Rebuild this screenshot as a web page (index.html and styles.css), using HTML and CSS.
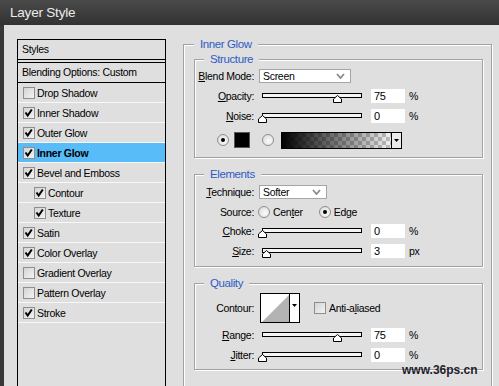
FILE: index.html
```html
<!DOCTYPE html>
<html>
<head>
<meta charset="utf-8">
<title>Layer Style</title>
<link rel="stylesheet" href="styles.css">
</head>
<body>
<div class="window">
  <div class="titlebar">Layer Style</div>
  <div class="main">
    <div class="styles-list">
      <div class="list-head">Styles</div>
      <div class="list-blend">Blending Options: Custom</div>
      <div class="item"><span class="cb"></span>Drop Shadow</div>
      <div class="item"><span class="cb"><svg viewBox="0 0 10 10"><path d="M1.5 4.5L3.7 7.6L7.8 1.5"/></svg></span>Inner Shadow</div>
      <div class="item"><span class="cb"><svg viewBox="0 0 10 10"><path d="M1.5 4.5L3.7 7.6L7.8 1.5"/></svg></span>Outer Glow</div>
      <div class="item sel"><span class="cb"><svg viewBox="0 0 10 10"><path d="M1.5 4.5L3.7 7.6L7.8 1.5"/></svg></span>Inner Glow</div>
      <div class="item"><span class="cb"><svg viewBox="0 0 10 10"><path d="M1.5 4.5L3.7 7.6L7.8 1.5"/></svg></span>Bevel and Emboss</div>
      <div class="item sub"><span class="cb"><svg viewBox="0 0 10 10"><path d="M1.5 4.5L3.7 7.6L7.8 1.5"/></svg></span>Contour</div>
      <div class="item sub"><span class="cb"><svg viewBox="0 0 10 10"><path d="M1.5 4.5L3.7 7.6L7.8 1.5"/></svg></span>Texture</div>
      <div class="item"><span class="cb"><svg viewBox="0 0 10 10"><path d="M1.5 4.5L3.7 7.6L7.8 1.5"/></svg></span>Satin</div>
      <div class="item"><span class="cb"><svg viewBox="0 0 10 10"><path d="M1.5 4.5L3.7 7.6L7.8 1.5"/></svg></span>Color Overlay</div>
      <div class="item"><span class="cb"></span>Gradient Overlay</div>
      <div class="item"><span class="cb"></span>Pattern Overlay</div>
      <div class="item"><span class="cb"><svg viewBox="0 0 10 10"><path d="M1.5 4.5L3.7 7.6L7.8 1.5"/></svg></span>Stroke</div>
    </div>

    <section class="group outer">
      <div class="legend outer-legend">Inner Glow</div>

      <section class="group inner structure">
        <div class="legend">Structure</div>
        <div class="row h20">
          <span class="lbl"><u>B</u>lend Mode:</span>
          <div class="ctl"><div class="select w-blend"><span>Screen</span><svg class="chev" viewBox="0 0 9 6"><polyline points="1,1 4.5,5 8,1"/></svg></div></div>
        </div>
        <div class="row h20">
          <span class="lbl"><u>O</u>pacity:</span>
          <div class="ctl"><div class="slider"><div class="track"></div><svg class="thumb" style="left:71px" viewBox="0 0 9 8"><polygon points="0.5,7.5 0.5,4 4.5,0.5 8.5,4 8.5,7.5"/></svg></div><span class="num">75</span><span class="unit">%</span></div>
        </div>
        <div class="row h20">
          <span class="lbl"><u>N</u>oise:</span>
          <div class="ctl"><div class="slider"><div class="track"></div><svg class="thumb" style="left:-4px" viewBox="0 0 9 8"><polygon points="0.5,7.5 0.5,4 4.5,0.5 8.5,4 8.5,7.5"/></svg></div><span class="num">0</span><span class="unit">%</span></div>
        </div>
        <div class="color-row">
          <span class="radio on"></span>
          <span class="swatch"></span>
          <span class="radio r2"></span>
          <div class="gradbox"><span class="grad"></span><span class="gbtn"><svg viewBox="0 0 5 3"><polygon points="0,0 5,0 2.5,3"/></svg></span></div>
        </div>
      </section>

      <section class="group inner elements">
        <div class="legend">Elements</div>
        <div class="row h21">
          <span class="lbl"><u>T</u>echnique:</span>
          <div class="ctl"><div class="select w-tech"><span>Softer</span><svg class="chev" viewBox="0 0 9 6"><polyline points="1,1 4.5,5 8,1"/></svg></div></div>
        </div>
        <div class="row h20">
          <span class="lbl">Source:</span>
          <div class="ctl src"><span class="radio"></span><span class="rtext">Cen<u>t</u>er</span><span class="radio on r-edge"></span><span class="rtext">Ed<u>g</u>e</span></div>
        </div>
        <div class="row h18">
          <span class="lbl"><u>C</u>hoke:</span>
          <div class="ctl"><div class="slider"><div class="track"></div><svg class="thumb" style="left:-4px" viewBox="0 0 9 8"><polygon points="0.5,7.5 0.5,4 4.5,0.5 8.5,4 8.5,7.5"/></svg></div><span class="num">0</span><span class="unit">%</span></div>
        </div>
        <div class="row h21">
          <span class="lbl"><u>S</u>ize:</span>
          <div class="ctl"><div class="slider"><div class="track"></div><svg class="thumb" style="left:0px" viewBox="0 0 9 8"><polygon points="0.5,7.5 0.5,4 4.5,0.5 8.5,4 8.5,7.5"/></svg></div><span class="num">3</span><span class="unit">px</span></div>
        </div>
      </section>

      <section class="group inner quality">
        <div class="legend">Quality</div>
        <div class="row h35">
          <span class="lbl">Contour:</span>
          <div class="ctl">
            <div class="contour"><span class="cprev"><svg viewBox="0 0 28 28"><polygon points="1,28 28,1 28,28"/></svg></span><span class="cbtn"><svg viewBox="0 0 5 3"><polygon points="0,0 5,0 2.5,3"/></svg></span></div>
            <span class="cb aa"></span><span class="aa-text">Anti-a<u>l</u>iased</span>
          </div>
        </div>
        <div class="row h20">
          <span class="lbl"><u>R</u>ange:</span>
          <div class="ctl"><div class="slider"><div class="track"></div><svg class="thumb" style="left:71px" viewBox="0 0 9 8"><polygon points="0.5,7.5 0.5,4 4.5,0.5 8.5,4 8.5,7.5"/></svg></div><span class="num">75</span><span class="unit">%</span></div>
        </div>
        <div class="row h19">
          <span class="lbl"><u>J</u>itter:</span>
          <div class="ctl"><div class="slider"><div class="track"></div><svg class="thumb" style="left:-4px" viewBox="0 0 9 8"><polygon points="0.5,7.5 0.5,4 4.5,0.5 8.5,4 8.5,7.5"/></svg></div><span class="num">0</span><span class="unit">%</span></div>
        </div>
      </section>
    </section>
  </div>
  <div class="wm">www.36ps.cn</div>
</div>
</body>
</html>
```

FILE: styles.css
```css
* { box-sizing: border-box; }
html, body { margin: 0; padding: 0; }
body {
  width: 499px;
  height: 386px;
  overflow: hidden;
  background: #dfdfdf;
  font-family: "Liberation Sans", Arial, sans-serif;
  font-size: 10.5px;
  letter-spacing: -0.3px;
  color: #000;
}
u { text-decoration: underline; text-underline-offset: 1px; }

.window {
  position: relative;
  width: 499px;
  height: 386px;
  display: flex;
  flex-direction: column;
  overflow: hidden;
}
.titlebar {
  height: 25px;
  flex: none;
  background: linear-gradient(#4a4a4a, #323232);
  color: #ececec;
  font-size: 13.5px;
  letter-spacing: -0.2px;
  line-height: 25px;
  padding-left: 10px;
}
.main {
  flex: 1;
  min-height: 0;
  display: flex;
  align-items: flex-start;
  gap: 17px;
  border-left: 4px solid #383838;
  padding-left: 13px;
  overflow: hidden;
}

/* styles list */
.styles-list {
  flex: none;
  width: 149px;
  height: 400px;
  margin-top: 14px;
  border: 1px solid #000;
}
.list-head {
  height: 20px;
  line-height: 19px;
  padding-left: 4px;
  border-bottom: 1px solid #000;
}
.list-blend {
  height: 21px;
  margin-top: 2px;
  line-height: 19px;
  padding-left: 4px;
  border-top: 1px solid #000;
  border-bottom: 1px solid #000;
}
.item {
  height: 20px;
  display: flex;
  align-items: center;
  padding-left: 5px;
  border-bottom: 1px solid #f8f8f8;
}
.item.sub { padding-left: 16px; }
.item.sel { background: #58bcf8; font-weight: bold; }

.cb {
  flex: none;
  width: 12px;
  height: 12px;
  margin-right: 2px;
  border: 1px solid #8e8e8e;
  background: linear-gradient(135deg, #d4d4d4, #f3f3f3);
  display: flex;
}
.cb svg {
  width: 10px;
  height: 10px;
  fill: none;
  stroke: #000;
  stroke-width: 2;
}

/* group boxes */
.group {
  border: 1px solid #a2a2a2;
  box-shadow: inset 1px 1px 0 #fff, 1px 1px 0 #fff;
}
.group > .legend {
  width: fit-content;
  height: 14px;
  margin-top: -8px;
  margin-left: 9px;
  padding: 0 6px;
  color: #2f5bc4;
  font-size: 11.5px;
  letter-spacing: -0.4px;
  line-height: 14px;
  background: #dfdfdf;
}
.outer {
  flex: none;
  width: 309px;
  margin-top: 19px;
  padding: 0 8px 60px 10px;
}
.outer > .outer-legend { margin-left: 0; }
.structure { margin-top: 8px; padding-bottom: 3px; }
.elements { margin-top: 16px; padding-bottom: 5px; }
.quality { margin-top: 16px; padding-bottom: 5px; }

.row {
  display: grid;
  grid-template-columns: 59px 1fr;
  column-gap: 5px;
  align-items: center;
}
.h18 { height: 18px; }
.h19 { height: 19px; }
.h20 { height: 20px; }
.h21 { height: 21px; }
.h35 { height: 35px; }
.lbl { text-align: right; white-space: nowrap; }
.ctl { display: flex; align-items: center; }

.select {
  height: 14px;
  border: 1px solid #a5a5a5;
  background: #fff;
  display: flex;
  align-items: center;
  justify-content: space-between;
  padding: 0 5px 0 3px;
}
.w-blend { width: 92px; }
.w-tech { width: 68px; }
.chev {
  width: 9px;
  height: 6px;
  fill: none;
  stroke: #8a8a8a;
  stroke-width: 1.8;
}

.slider {
  position: relative;
  width: 100px;
  height: 12px;
  margin-left: 3px;
  flex: none;
}
.track {
  margin-top: 3px;
  height: 5px;
  border: 1px solid #000;
  background: #f4f4f4;
}
.thumb {
  position: absolute;
  top: 5px;
  width: 9px;
  height: 8px;
  fill: #fff;
  stroke: #000;
  stroke-width: 1;
}
.num {
  width: 34px;
  height: 14px;
  margin-left: 9px;
  padding-left: 3px;
  line-height: 14px;
  background: #fff;
  font-size: 11px;
}
.unit { margin-left: 4px; }

.color-row {
  height: 28px;
  display: flex;
  align-items: center;
  padding-left: 22px;
}
.radio {
  flex: none;
  width: 12px;
  height: 12px;
  border-radius: 50%;
  border: 1px solid #8e8e8e;
  background: radial-gradient(circle at 60% 60%, #fbfbfb, #d6d6d6);
  display: flex;
  align-items: center;
  justify-content: center;
}
.radio.on::after {
  content: "";
  width: 4px;
  height: 4px;
  border-radius: 50%;
  background: #000;
}
.swatch {
  width: 16px;
  height: 16px;
  margin-left: 5px;
  background: #000;
  border: 1px solid #555;
}
.radio.r2 { margin-left: 12px; }
.gradbox {
  margin-left: 7px;
  width: 121px;
  height: 17px;
  border: 1px solid #000;
  display: flex;
}
.grad {
  flex: 1;
  background:
    linear-gradient(to right, #000, rgba(0, 0, 0, 0)),
    repeating-conic-gradient(#bdbdbd 0 25%, #f2f2f2 0 50%) 0 0 / 8px 8px;
}
.gbtn {
  width: 10px;
  border-left: 1px solid #000;
  background: #ececec;
  display: flex;
  align-items: center;
  justify-content: center;
}
.gbtn svg, .cbtn svg { width: 5px; height: 3px; fill: #000; }

.src .radio:first-child { margin-left: -1px; }
.rtext { margin-left: 3px; }
.r-edge { margin-left: 16px; }

.contour {
  margin-left: 1px;
  width: 40px;
  height: 30px;
  border: 1px solid #000;
  display: flex;
}
.cprev {
  flex: 1;
  background: #fff;
  display: flex;
}
.cprev svg { width: 100%; height: 100%; fill: #b3b3b3; }
.cbtn {
  width: 10px;
  border-left: 1px solid #000;
  background: #fff;
  display: flex;
  justify-content: center;
  padding-top: 10px;
}
.cb.aa { margin-left: 14px; margin-right: 0; }
.aa-text { margin-left: 3px; }

.wm {
  position: absolute;
  left: 402px;
  top: 364px;
  font-family: "Liberation Sans", Arial, sans-serif;
  font-weight: bold;
  font-size: 12px;
  line-height: 12px;
  letter-spacing: 0;
  color: #1e1e2c;
}
```
